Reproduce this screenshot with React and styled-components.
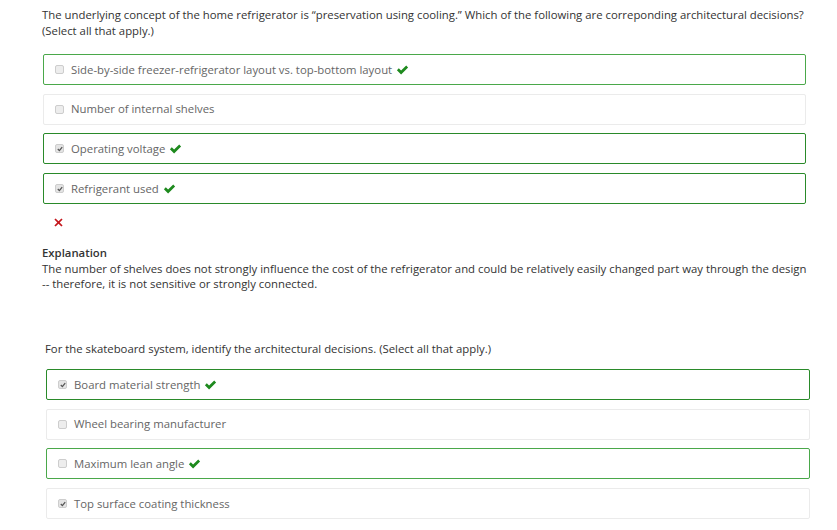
import React from 'react';
import styled, { createGlobalStyle } from 'styled-components';

const GlobalStyle = createGlobalStyle`
  html, body {
    margin: 0;
    padding: 0;
    background: #fff;
    font-family: "Open Sans", "Noto Sans", sans-serif;
    font-size: 11.35px;
    color: #333;
  }
`;

const questions = [
  {
    text: 'The underlying concept of the home refrigerator is \u201cpreservation using cooling.\u201d Which of the following are correponding architectural decisions? (Select all that apply.)',
    inset: 42,
    right: 29,
    listTop: 16,
    listRight: 2,
    options: [
      { label: 'Side-by-side freezer-refrigerator layout vs. top-bottom layout', checked: false, correct: true, tone: 'light' },
      { label: 'Number of internal shelves', checked: false },
      { label: 'Operating voltage', checked: true, correct: true },
      { label: 'Refrigerant used', checked: true, correct: true },
    ],
    wrong: true,
    explanation:
      'The number of shelves does not strongly influence the cost of the refrigerator and could be relatively easily changed part way through the design -- therefore, it is not sensitive or strongly connected.',
  },
  {
    text: 'For the skateboard system, identify the architectural decisions. (Select all that apply.)',
    inset: 45,
    right: 27,
    listTop: 13,
    listRight: 0,
    options: [
      { label: 'Board material strength', checked: true, correct: true },
      { label: 'Wheel bearing manufacturer', checked: false },
      { label: 'Maximum lean angle', checked: false, correct: true, tone: 'light' },
      { label: 'Top surface coating thickness', checked: true },
    ],
  },
];

const CheckIcon = () => (
  <svg width="13" height="10" viewBox="0 0 12 10">
    <path d="M0.4 5.2 L2.3 3.3 L4.6 5.6 L9.7 0.5 L11.6 2.4 L4.6 9.4 Z" fill="#1e8a1e" />
  </svg>
);

const CrossIcon = () => (
  <svg width="9" height="9" viewBox="0 0 9 9">
    <path d="M1.6 0.4 L4.5 3.3 L7.4 0.4 L8.6 1.6 L5.7 4.5 L8.6 7.4 L7.4 8.6 L4.5 5.7 L1.6 8.6 L0.4 7.4 L3.3 4.5 L0.4 1.6 Z" fill="#c4161c" />
  </svg>
);

const Quiz = ({ q }) => (
  <Section $inset={q.inset} $right={q.right}>
    <Prompt>{q.text}</Prompt>
    <Options $top={q.listTop} $right={q.listRight}>
      {q.options.map((o) => (
        <Option key={o.label} $correct={o.correct} $tone={o.tone}>
          <Box $checked={o.checked}>{o.checked && <Tick viewBox="0 0 6 6"><path d="M0.8 3 L2.4 4.6 L5.2 1.2" /></Tick>}</Box>
          <Label>{o.label}</Label>
          {o.correct && <CheckIcon />}
        </Option>
      ))}
    </Options>
    {q.wrong && (
      <Mark>
        <CrossIcon />
      </Mark>
    )}
    {q.explanation && (
      <Explanation>
        <strong>Explanation</strong>
        <p>{q.explanation}</p>
      </Explanation>
    )}
  </Section>
);

const App = () => (
  <>
    <GlobalStyle />
    <Page>
      {questions.map((q, i) => (
        <Quiz key={i} q={q} />
      ))}
    </Page>
  </>
);

const Page = styled.div`
  display: flex;
  flex-direction: column;
  gap: 49px;
  padding-top: 7px;
`;

const Section = styled.div`
  margin-left: ${(p) => p.$inset}px;
  margin-right: ${(p) => p.$right}px;
`;

const Prompt = styled.div`
  line-height: 15.5px;
  color: #333;
`;

const Options = styled.div`
  display: flex;
  flex-direction: column;
  gap: 8.7px;
  margin-top: ${(p) => p.$top}px;
  margin-left: 1px;
  margin-right: ${(p) => p.$right}px;
`;

const Option = styled.div`
  display: flex;
  align-items: center;
  gap: 4px;
  height: 31px;
  box-sizing: border-box;
  padding-left: 11px;
  border-radius: 2px;
  border: ${(p) =>
    p.$correct
      ? p.$tone === 'light'
        ? '1.5px solid #4aa84a'
        : '1.5px solid #2a8a2a'
      : '1.5px solid #ebebeb'};
  color: #666;
`;

const Box = styled.span`
  width: 7px;
  height: 7px;
  border: 1px solid #cdcdcd;
  border-radius: 2px;
  background: ${(p) => (p.$checked ? '#e4e4e4' : '#ededed')};
  display: inline-flex;
  align-items: center;
  justify-content: center;
  margin-right: 3px;
`;

const Tick = styled.svg`
  width: 6px;
  height: 6px;
  fill: none;
  stroke: #555;
  stroke-width: 1.3;
`;

const Label = styled.span`
  line-height: 14px;
`;

const Mark = styled.div`
  margin: 11px 0 0 12px;
  height: 10px;
`;

const Explanation = styled.div`
  margin-top: 20px;
  line-height: 15.5px;
  color: #333;

  & strong {
    font-weight: 600;
    color: #333;
  }

  & p {
    margin: 0;
  }
`;

export default App;
